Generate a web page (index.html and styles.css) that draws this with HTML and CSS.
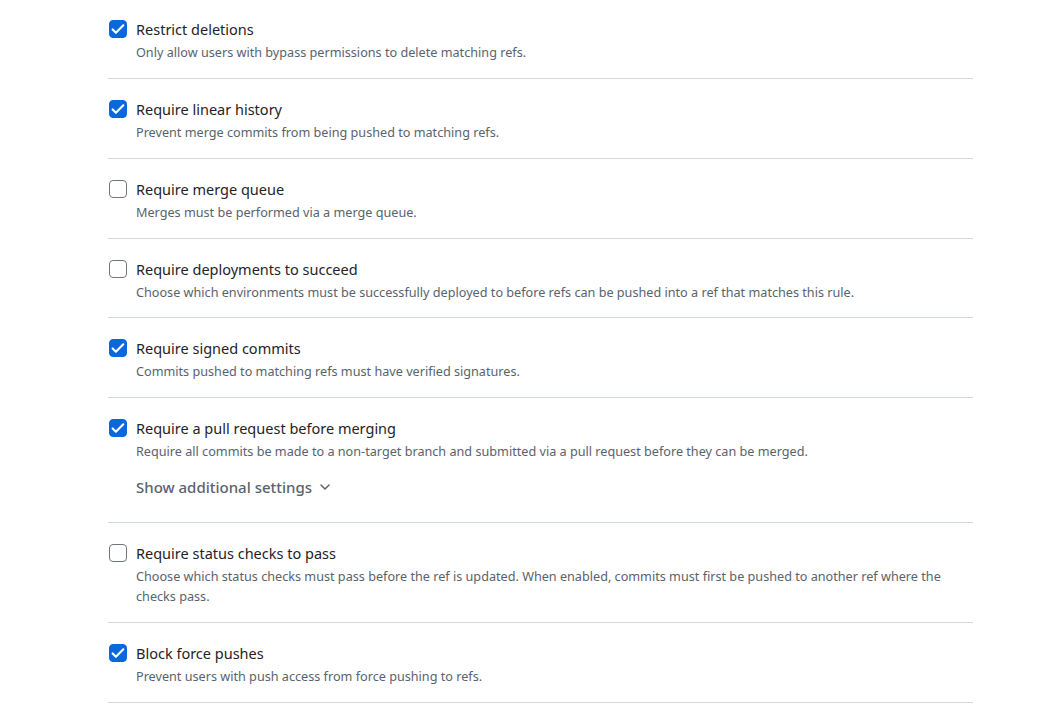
FILE: index.html
```html
<!DOCTYPE html>
<html lang="en">
<head>
<meta charset="utf-8">
<title>Rules</title>
<link rel="stylesheet" href="styles.css">
</head>
<body>
<div class="rules">
  <div class="rule">
    <span class="box checked"><svg viewBox="0 0 16 16" width="16" height="16"><path d="M2.6 8.4l3.3 3.3 7.4-7.4" fill="none" stroke="#fff" stroke-width="2.1" stroke-linecap="round" stroke-linejoin="round"/></svg></span>
    <div class="text">
      <div class="title">Restrict deletions</div>
      <div class="desc">Only allow users with bypass permissions to delete matching refs.</div>
    </div>
  </div>
  <div class="rule">
    <span class="box checked"><svg viewBox="0 0 16 16" width="16" height="16"><path d="M2.6 8.4l3.3 3.3 7.4-7.4" fill="none" stroke="#fff" stroke-width="2.1" stroke-linecap="round" stroke-linejoin="round"/></svg></span>
    <div class="text">
      <div class="title">Require linear history</div>
      <div class="desc">Prevent merge commits from being pushed to matching refs.</div>
    </div>
  </div>
  <div class="rule">
    <span class="box"></span>
    <div class="text">
      <div class="title">Require merge queue</div>
      <div class="desc">Merges must be performed via a merge queue.</div>
    </div>
  </div>
  <div class="rule">
    <span class="box"></span>
    <div class="text">
      <div class="title">Require deployments to succeed</div>
      <div class="desc">Choose which environments must be successfully deployed to before refs can be pushed into a ref that matches this rule.</div>
    </div>
  </div>
  <div class="rule">
    <span class="box checked"><svg viewBox="0 0 16 16" width="16" height="16"><path d="M2.6 8.4l3.3 3.3 7.4-7.4" fill="none" stroke="#fff" stroke-width="2.1" stroke-linecap="round" stroke-linejoin="round"/></svg></span>
    <div class="text">
      <div class="title">Require signed commits</div>
      <div class="desc">Commits pushed to matching refs must have verified signatures.</div>
    </div>
  </div>
  <div class="rule">
    <span class="box checked"><svg viewBox="0 0 16 16" width="16" height="16"><path d="M2.6 8.4l3.3 3.3 7.4-7.4" fill="none" stroke="#fff" stroke-width="2.1" stroke-linecap="round" stroke-linejoin="round"/></svg></span>
    <div class="text">
      <div class="title">Require a pull request before merging</div>
      <div class="desc">Require all commits be made to a non-target branch and submitted via a pull request before they can be merged.</div>
      <button class="more" type="button">Show additional settings <svg viewBox="0 0 16 16" width="16" height="16"><path d="M4 6l4 4 4-4" fill="none" stroke="#59636e" stroke-width="1.5" stroke-linecap="round" stroke-linejoin="round"/></svg></button>
    </div>
  </div>
  <div class="rule">
    <span class="box"></span>
    <div class="text">
      <div class="title">Require status checks to pass</div>
      <div class="desc">Choose which status checks must pass before the ref is updated. When enabled, commits must first be pushed to another ref where the checks pass.</div>
    </div>
  </div>
  <div class="rule">
    <span class="box checked"><svg viewBox="0 0 16 16" width="16" height="16"><path d="M2.6 8.4l3.3 3.3 7.4-7.4" fill="none" stroke="#fff" stroke-width="2.1" stroke-linecap="round" stroke-linejoin="round"/></svg></span>
    <div class="text">
      <div class="title">Block force pushes</div>
      <div class="desc">Prevent users with push access from force pushing to refs.</div>
    </div>
  </div>
</div>
</body>
</html>
```

FILE: styles.css
```css
html, body {
  margin: 0;
  padding: 0;
  background: #ffffff;
}
body {
  font-family: "Noto Sans", "Open Sans", sans-serif;
  color: #1f2328;
  overflow: hidden;
}
.rules {
  width: 865px;
  margin: -0.55px 0 0 108px;
}
.rule {
  display: flex;
  gap: 9px;
  padding: 19px 0 15.75px 1px;
  border-bottom: 1px solid #d1d9e0;
}
.box {
  flex: none;
  box-sizing: border-box;
  width: 18px;
  height: 18px;
  margin-top: 2px;
  border: 1px solid #6e7781;
  border-radius: 4px;
  display: flex;
  align-items: center;
  justify-content: center;
  background: #fff;
}
.box.checked {
  background: #0969da;
  border-color: #0969da;
}
.text {
  flex: 1;
  min-width: 0;
}
.title {
  font-size: 14.5px;
  line-height: 22px;
  color: #1f2328;
}
.desc {
  margin-top: 2px;
  font-size: 12.65px;
  line-height: 20px;
  color: #59636e;
}
.more {
  display: flex;
  align-items: center;
  gap: 5px;
  margin: 14px 0 7.25px;
  padding: 0;
  border: 0;
  background: none;
  font-family: inherit;
  font-size: 15px;
  font-weight: 500;
  line-height: 24px;
  color: #59636e;
}
```
